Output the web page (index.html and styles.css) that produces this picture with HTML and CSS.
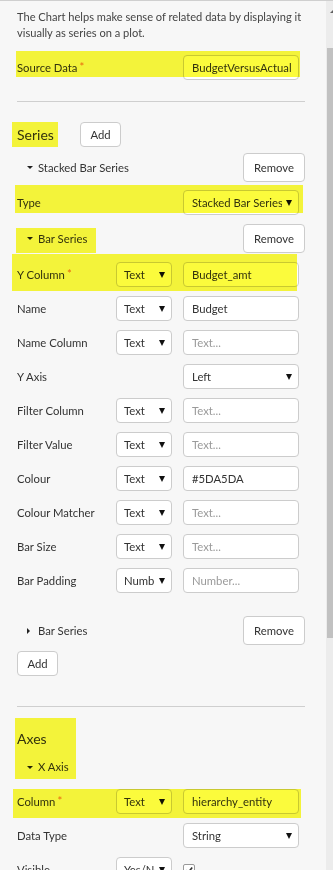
FILE: index.html
```html
<!DOCTYPE html>
<html lang="en">
<head>
<meta charset="utf-8">
<title>Chart</title>
<link rel="stylesheet" href="styles.css">
</head>
<body>
<div class="page">
  <main class="panel">
    <p class="desc">The Chart helps make sense of related data by displaying it visually as series on a plot.</p>

    <div class="row row-source hl hl-source">
      <label class="lbl">Source Data<span class="req">*</span></label>
      <input class="inp col3" value="BudgetVersusActual">
    </div>

    <hr class="rule rule-1">

    <div class="section-head">
      <h2 class="heading hl hl-series">Series</h2>
      <button class="btn btn-add">Add</button>
    </div>

    <div class="tree-head tree-stacked">
      <span class="tree-title"><i class="tri-down"></i>Stacked Bar Series</span>
      <button class="btn btn-remove">Remove</button>
    </div>

    <div class="row row-type hl hl-type">
      <label class="lbl">Type</label>
      <div class="sel col3"><span class="sel-val">Stacked Bar Series</span><i class="caret"></i></div>
    </div>

    <div class="tree-head tree-bar">
      <span class="tree-title hl hl-bar"><i class="tri-down"></i>Bar Series</span>
      <button class="btn btn-remove">Remove</button>
    </div>

    <div class="rows">
      <div class="row hl hl-ycol">
        <label class="lbl">Y Column<span class="req">*</span></label>
        <div class="sel"><span class="sel-val">Text</span><i class="caret"></i></div>
        <input class="inp" value="Budget_amt">
      </div>
      <div class="row">
        <label class="lbl">Name</label>
        <div class="sel"><span class="sel-val">Text</span><i class="caret"></i></div>
        <input class="inp" value="Budget">
      </div>
      <div class="row">
        <label class="lbl">Name Column</label>
        <div class="sel"><span class="sel-val">Text</span><i class="caret"></i></div>
        <input class="inp" placeholder="Text...">
      </div>
      <div class="row">
        <label class="lbl">Y Axis</label>
        <div class="sel col3"><span class="sel-val">Left</span><i class="caret"></i></div>
      </div>
      <div class="row">
        <label class="lbl">Filter Column</label>
        <div class="sel"><span class="sel-val">Text</span><i class="caret"></i></div>
        <input class="inp" placeholder="Text...">
      </div>
      <div class="row">
        <label class="lbl">Filter Value</label>
        <div class="sel"><span class="sel-val">Text</span><i class="caret"></i></div>
        <input class="inp" placeholder="Text...">
      </div>
      <div class="row">
        <label class="lbl">Colour</label>
        <div class="sel"><span class="sel-val">Text</span><i class="caret"></i></div>
        <input class="inp" value="#5DA5DA">
      </div>
      <div class="row">
        <label class="lbl">Colour Matcher</label>
        <div class="sel"><span class="sel-val">Text</span><i class="caret"></i></div>
        <input class="inp" placeholder="Text...">
      </div>
      <div class="row">
        <label class="lbl">Bar Size</label>
        <div class="sel"><span class="sel-val">Text</span><i class="caret"></i></div>
        <input class="inp" placeholder="Text...">
      </div>
      <div class="row">
        <label class="lbl">Bar Padding</label>
        <div class="sel"><span class="sel-val">Number</span><i class="caret"></i></div>
        <input class="inp" placeholder="Number...">
      </div>
    </div>

    <div class="tree-head tree-collapsed">
      <span class="tree-title"><i class="tri-right"></i>Bar Series</span>
      <button class="btn btn-remove">Remove</button>
    </div>

    <button class="btn btn-add btn-add-bottom">Add</button>

    <hr class="rule rule-2">

    <div class="axes-head hl hl-axes">
      <h2 class="heading">Axes</h2>
      <div class="tree-title xaxis"><i class="tri-down"></i>X Axis</div>
    </div>

    <div class="rows rows-axis">
      <div class="row hl hl-col">
        <label class="lbl">Column<span class="req">*</span></label>
        <div class="sel"><span class="sel-val">Text</span><i class="caret"></i></div>
        <input class="inp" value="hierarchy_entity">
      </div>
      <div class="row">
        <label class="lbl">Data Type</label>
        <div class="sel col3"><span class="sel-val">String</span><i class="caret"></i></div>
      </div>
      <div class="row">
        <label class="lbl">Visible</label>
        <div class="sel"><span class="sel-val">Yes/No</span><i class="caret"></i></div>
        <span class="check"><svg viewBox="0 0 10 10" width="10" height="10"><path d="M2 5.2 L4.2 7.4 L8.2 2.6" fill="none" stroke="#333" stroke-width="1.6"/></svg></span>
      </div>
    </div>
  </main>
  <div class="scrollbar">
    <i class="sb-arrow"></i>
    <div class="sb-thumb"></div>
  </div>
</div>
</body>
</html>
```

FILE: styles.css
```css
* { box-sizing: border-box; }

html, body {
  margin: 0;
  padding: 0;
  height: 870px;
  overflow: hidden;
  background: #f7f7f7;
}

body {
  font-family: Lato, "Open Sans", sans-serif;
  font-size: 11.3px;
  color: #333;
}

.page {
  display: flex;
  height: 870px;
  border-top: 1px solid #cfcfcf;
}

.panel {
  width: 326px;
  flex: 0 0 326px;
  padding: 8px 21px 0 17px;
  display: flex;
  flex-direction: column;
  align-items: stretch;
}

.panel > * { flex-shrink: 0; }

.desc {
  margin: 0;
  font-size: 11.1px;
  line-height: 16px;
  color: #444;
}

/* highlight annotation overlay */
.hl { position: relative; }
.hl::after {
  content: "";
  position: absolute;
  background: #fbfb3c;
  mix-blend-mode: multiply;
  pointer-events: none;
}
.hl-source::after { left: -1px; right: 5px; top: -4px; height: 26px; }
.hl-series::after { left: -5px; width: 46px; top: 0; bottom: 0; }
.hl-type::after { left: -2px; right: 2px; top: -5px; height: 28px; }
.hl-bar::after { left: -1px; width: 80px; top: -4px; height: 25px; }
.hl-ycol::after { left: -5px; right: 8px; top: -8px; height: 37px; }
.hl-axes::after { left: -2px; width: 61px; top: -11px; bottom: -3px; }
.hl-col::after { left: -4px; right: 4px; top: 0; height: 29px; }

.row {
  display: grid;
  grid-template-columns: 88px 56px 116px;
  column-gap: 11px;
  align-items: center;
  height: 25px;
  flex-shrink: 0;
}

.row-source { margin-top: 14px; }
.row-type { margin-top: 8px; }

.lbl {
  grid-column: 1;
  white-space: nowrap;
  color: #333;
}

.req {
  color: #ee6a35;
  margin-left: 2px;
  position: relative;
  top: -1px;
}

.col3 { grid-column: 3; }

.inp {
  height: 25px;
  width: 116px;
  border: 1px solid #cccccc;
  border-radius: 4px;
  background: #fff;
  padding: 0 6px 0 8px;
  font: inherit;
  color: #333;
  outline: none;
}
.inp::placeholder { color: #9a9a9a; }

.sel {
  height: 25px;
  border: 1px solid #cccccc;
  border-radius: 4px;
  background: #fff;
  display: flex;
  align-items: center;
  padding: 0 6px 0 7px;
  gap: 4px;
}
.sel.col3 { padding-left: 8px; }

.sel-val {
  flex: 1;
  min-width: 0;
  overflow: hidden;
  white-space: nowrap;
  color: #333;
}

.caret {
  flex: 0 0 auto;
  width: 0;
  height: 0;
  border-left: 3px solid transparent;
  border-right: 3px solid transparent;
  border-top: 6px solid #111;
}

.rule {
  border: 0;
  border-top: 1px solid #cfcfcf;
  margin: 0;
  height: 0;
}
.rule-1 { margin-top: 21px; }
.rule-2 { margin-top: 30px; }

.section-head {
  display: flex;
  align-items: center;
  margin-top: 20px;
  height: 25px;
}

.heading {
  margin: 0;
  font-size: 14px;
  font-weight: normal;
  line-height: 20px;
  color: #333;
}

.section-head .heading {
  width: 63px;
  height: 25px;
  line-height: 26px;
}

.btn {
  font: inherit;
  color: #333;
  background: #fff;
  border: 1px solid #cccccc;
  border-radius: 4px;
  padding: 0;
  cursor: pointer;
  flex-shrink: 0;
}

.btn-add {
  width: 41px;
  height: 25px;
}

.btn-remove {
  width: 62px;
  height: 29px;
}

.tree-head {
  display: flex;
  align-items: center;
  justify-content: space-between;
  height: 29px;
}
.tree-stacked { margin-top: 6px; }
.tree-bar { margin-top: 9px; }
.tree-collapsed { margin-top: 23px; }

.tree-title {
  display: inline-flex;
  align-items: center;
  padding-left: 10px;
  color: #333;
}

.tri-down {
  width: 0;
  height: 0;
  border-left: 3px solid transparent;
  border-right: 3px solid transparent;
  border-top: 3px solid #222;
  margin-right: 5px;
}

.tri-right {
  width: 0;
  height: 0;
  border-top: 3px solid transparent;
  border-bottom: 3px solid transparent;
  border-left: 3px solid #222;
  margin-right: 8px;
}

.rows {
  display: flex;
  flex-direction: column;
  gap: 9px;
  margin-top: 9px;
}

.btn-add-bottom {
  margin-top: 6px;
  align-self: flex-start;
}

.axes-head {
  margin-top: 22px;
  display: flex;
  flex-direction: column;
  align-self: flex-start;
}

.xaxis {
  margin-top: 9px;
  line-height: 18px;
}

.rows-axis { margin-top: 13px; }

.check {
  grid-column: 3;
  width: 12px;
  height: 12px;
  border: 1px solid #9a9a9a;
  border-radius: 2px;
  background: #fff;
  display: flex;
  align-items: center;
  justify-content: center;
}

.scrollbar {
  flex: 1;
  background: #ececec;
  display: flex;
  flex-direction: column;
  overflow: hidden;
}

.sb-arrow {
  width: 0;
  height: 0;
  margin: 8px 0 0 4px;
  border-left: 4px solid transparent;
  border-right: 4px solid transparent;
  border-bottom: 4px solid #606060;
}

.sb-thumb {
  margin: 35px 0 0 1px;
  height: 590px;
  background: #c1c1c1;
  flex-shrink: 0;
}
```
